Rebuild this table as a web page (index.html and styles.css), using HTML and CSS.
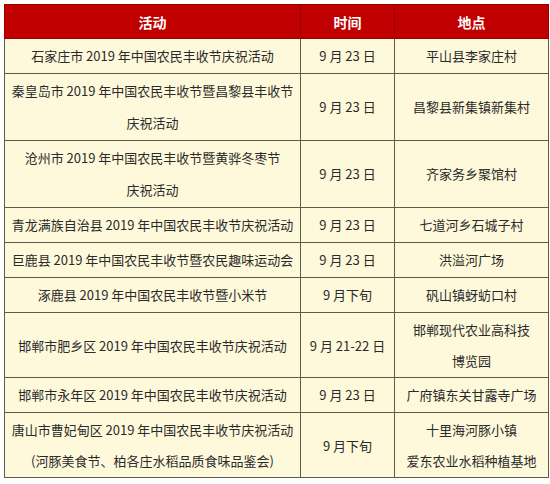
FILE: index.html
```html
<!DOCTYPE html>
<html lang="zh-CN">
<head>
<meta charset="utf-8">
<title>2019 中国农民丰收节</title>
<link rel="stylesheet" href="styles.css">
</head>
<body>
<div class="wrap">
<table class="events">
  <colgroup>
    <col class="c-act">
    <col class="c-time">
    <col class="c-place">
  </colgroup>
  <thead>
    <tr><th>活动</th><th>时间</th><th>地点</th></tr>
  </thead>
  <tbody>
    <tr><td>石家庄市 2019 年中国农民丰收节庆祝活动</td><td>9 月 23 日</td><td>平山县李家庄村</td></tr>
    <tr><td>秦皇岛市 2019 年中国农民丰收节暨昌黎县丰收节<br>庆祝活动</td><td>9 月 23 日</td><td>昌黎县新集镇新集村</td></tr>
    <tr><td>沧州市 2019 年中国农民丰收节暨黄骅冬枣节<br>庆祝活动</td><td>9 月 23 日</td><td>齐家务乡聚馆村</td></tr>
    <tr><td>青龙满族自治县 2019 年中国农民丰收节庆祝活动</td><td>9 月 23 日</td><td>七道河乡石城子村</td></tr>
    <tr><td>巨鹿县 2019 年中国农民丰收节暨农民趣味运动会</td><td>9 月 23 日</td><td>洪溢河广场</td></tr>
    <tr><td>涿鹿县 2019 年中国农民丰收节暨小米节</td><td>9 月下旬</td><td>矾山镇蚜蚄口村</td></tr>
    <tr class="tight"><td>邯郸市肥乡区 2019 年中国农民丰收节庆祝活动</td><td>9 月 21-22 日</td><td>邯郸现代农业高科技<br>博览园</td></tr>
    <tr><td>邯郸市永年区 2019 年中国农民丰收节庆祝活动</td><td>9 月 23 日</td><td>广府镇东关甘露寺广场</td></tr>
    <tr class="tight"><td>唐山市曹妃甸区 2019 年中国农民丰收节庆祝活动<br>(河豚美食节、柏各庄水稻品质食味品鉴会)</td><td>9 月下旬</td><td>十里海河豚小镇<br>爱东农业水稻种植基地</td></tr>
  </tbody>
</table>
</div>
</body>
</html>
```
FILE: styles.css
```css
html, body {
  margin: 0;
  padding: 0;
  background: #ffffff;
}

.wrap {
  padding: 4px 3px 0 4px;
}

.events {
  width: 544px;
  table-layout: fixed;
  border-collapse: collapse;
  font-family: "Noto Sans CJK SC", "Noto Sans", sans-serif;
  font-size: 13px;
  color: #2a2a2a;
}

.c-act { width: 296px; }
.c-time { width: 94px; }
.c-place { width: 154px; }

.events th {
  background: #c00000;
  color: #ffffff;
  font-size: 14px;
  font-weight: bold;
  height: 33px;
  padding: 0;
  border: 1px solid #9a0000;
  text-align: center;
  vertical-align: middle;
}

.events td {
  background: #fef9db;
  border: 1px solid #5d5b4a;
  padding: 1px 0;
  line-height: 32px;
  text-align: center;
  vertical-align: middle;
  white-space: nowrap;
}

.events .tight td {
  line-height: 31px;
}
```
